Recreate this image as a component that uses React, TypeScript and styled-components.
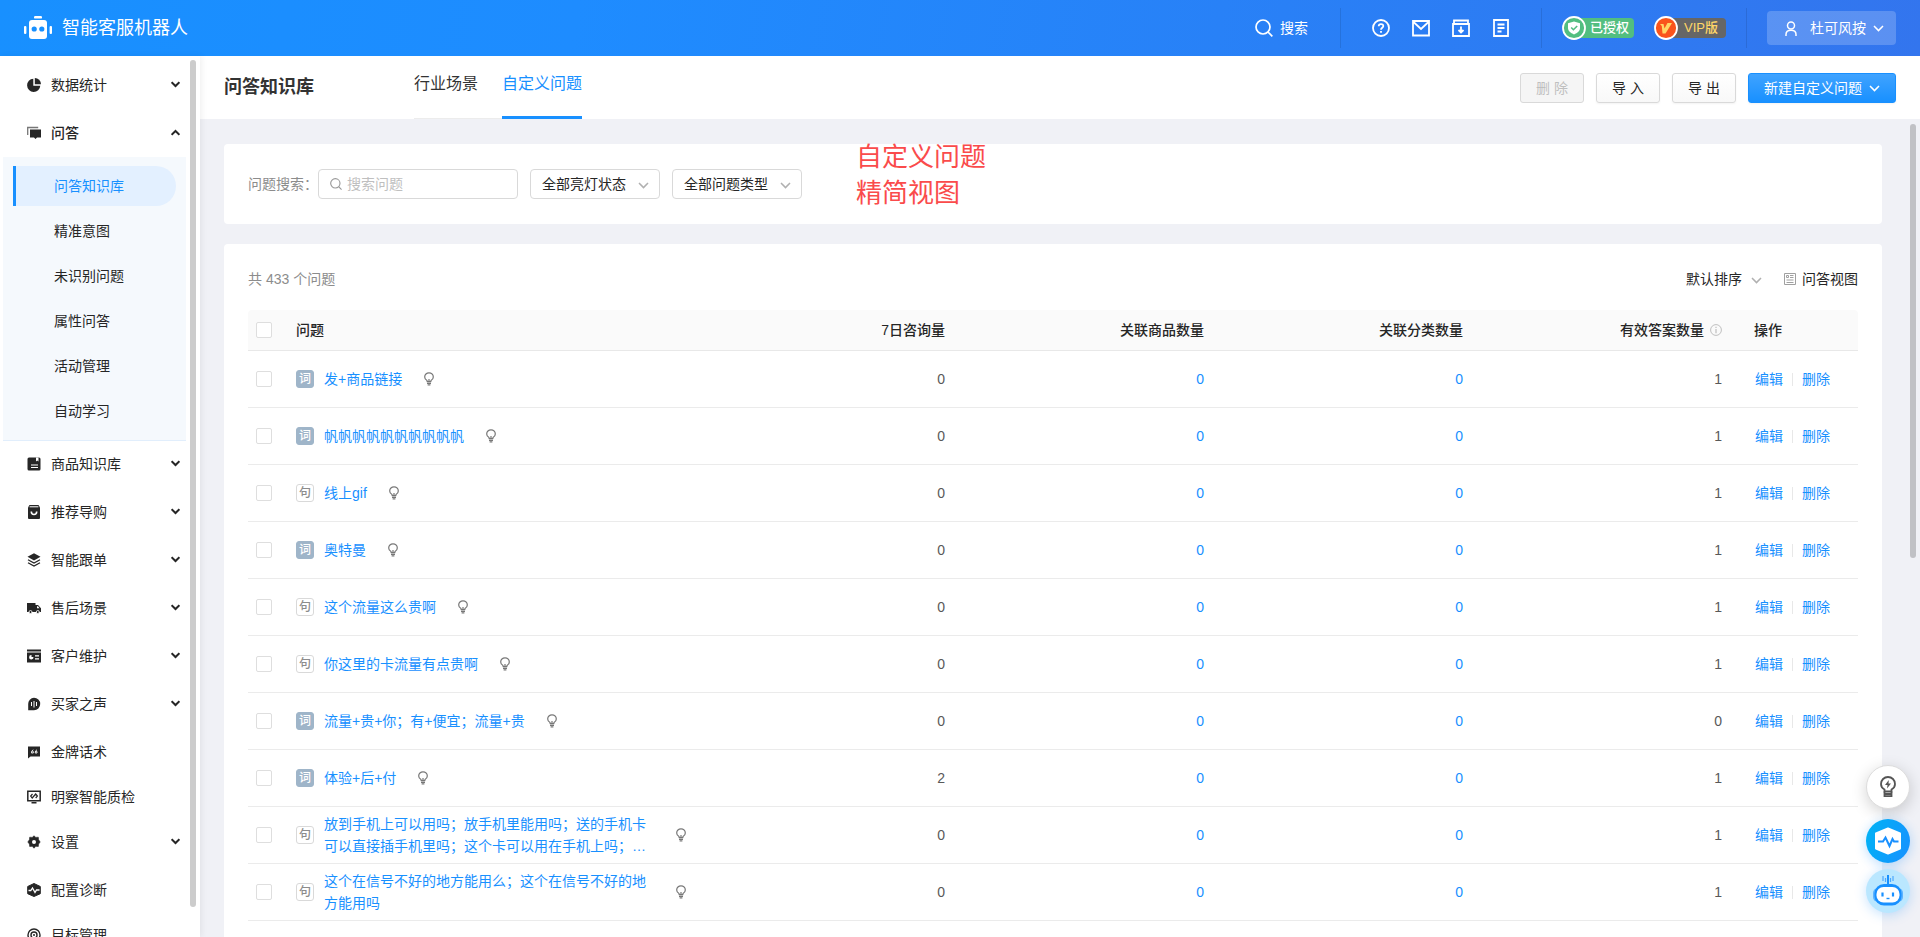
import React from 'react';
import styled, { createGlobalStyle, css } from 'styled-components';

const GlobalStyle = createGlobalStyle`
  *, *::before, *::after { box-sizing: border-box; }
  body {
    margin: 0;
    font-family: "Liberation Sans", "Noto Sans CJK SC", sans-serif;
    font-size: 14px;
    line-height: 22px;
    color: #262626;
  }
  button, input, select { font: inherit; color: inherit; }
  button { padding: 0; border: 0; background: none; cursor: pointer; }
  a { color: inherit; text-decoration: none; }
  svg { display: block; flex: none; }
`;

/* ---------- layout ---------- */

const Page = styled.div`
  display: flex;
  flex-direction: column;
  height: 100vh;
  overflow: hidden;
  background: #f0f1f6;
`;

const Body = styled.div`
  display: flex;
  flex: 1;
  min-height: 0;
`;

const Main = styled.main`
  display: flex;
  flex-direction: column;
  flex: 1;
  min-width: 0;
`;

/* ---------- top bar ---------- */

const TopBar = styled.header`
  display: flex;
  align-items: center;
  flex: none;
  height: 56px;
  padding: 0 24px;
  color: #fff;
  background: linear-gradient(100deg, #1890ff 0%, #1e8cff 30%, #3375ee 100%);
`;

const Brand = styled.a`
  display: flex;
  align-items: center;
  gap: 10px;
  margin-right: auto;
  font-size: 18px;
`;

const TopSearch = styled.button`
  display: flex;
  align-items: center;
  gap: 7px;
  margin-right: 12px;
`;

const TopDivider = styled.span`
  width: 1px;
  height: 40px;
  margin: 0 20px;
  background: rgba(0, 0, 0, 0.1);
`;

const TopIcons = styled.div`
  display: flex;
  align-items: center;
  gap: 22px;
  padding: 0 11px;
`;

const Badge = styled.span<{ $tone: 'green' | 'dark' }>`
  display: flex;
  align-items: center;
  gap: 4px;
  & + & { margin-left: 20px; }
  & > span {
    width: 60px;
    height: 20px;
    margin-left: -16px;
    padding-left: 16px;
    border-radius: 4px;
    font-size: 13px;
    font-weight: 500;
    line-height: 20px;
    ${(p) =>
      p.$tone === 'green'
        ? css`background: #52be80; color: #fff;`
        : css`background: #666; color: #ffd666; padding-left: 18px;`}
  }
  & > svg { position: relative; }
`;

const UserButton = styled.button`
  display: flex;
  align-items: center;
  height: 34px;
  padding: 0 12px 0 18px;
  border-radius: 4px;
  background: rgba(255, 255, 255, 0.2);
  & > span { margin: 0 7px 0 13px; }
`;

/* ---------- side bar ---------- */

const SideBar = styled.aside`
  display: flex;
  flex: none;
  width: 200px;
  overflow: hidden;
  background: #fff;
  position: relative;
  z-index: 1;
  box-shadow: 2px 0 6px rgba(0, 0, 0, 0.06);
`;

const Nav = styled.nav`
  flex: 1;
  padding-top: 6px;
  overflow: hidden;
`;

const SideThumb = styled.div`
  width: 6px;
  margin: 4px 4px 30px 0;
  border-radius: 3px;
  background: #ccc;
`;

const itemStyle = css`
  display: flex;
  align-items: center;
  gap: 10px;
  width: 100%;
  height: 45px;
  padding: 0 10px 0 27px;
  text-align: left;
  & > span { flex: 1; }
`;

const NavGroup = styled.button<{ $open?: boolean }>`
  ${itemStyle}
  margin-bottom: ${(p) => (p.$open ? 2 : 3)}px;
  font-weight: ${(p) => (p.$open ? 500 : 400)};
`;

const NavLeaf = styled.a`
  ${itemStyle}
`;

const SubMenu = styled.div`
  margin: 0 4px 0 3px;
  padding: 6px 0 7px 10px;
  border-bottom: 1px solid #e1eefc;
  background: #f5f9fd;
`;

const SubLink = styled.a<{ $active?: boolean }>`
  display: flex;
  align-items: center;
  height: 45px;
  padding-left: 41px;
  ${(p) =>
    p.$active &&
    css`
      height: 40px;
      margin: 3px 10px 2px 0;
      padding-left: 38px;
      border-left: 3px solid #1890ff;
      border-radius: 0 20px 20px 0;
      background: #e3f0ff;
      color: #1890ff;
    `}
`;

/* ---------- page head ---------- */

const PageHead = styled.div`
  display: flex;
  flex: none;
  height: 63px;
  padding: 0 24px;
  background: #fff;
`;

const Title = styled.h1`
  margin: 0 100px 0 0;
  font-size: 18px;
  line-height: 62px;
  font-weight: 700;
  color: #333;
`;

const Tabs = styled.nav`
  display: flex;
  gap: 24px;
  align-self: stretch;
  margin-right: auto;
  box-shadow: inset 0 -1px #ececec;
`;

const Tab = styled.a<{ $active?: boolean }>`
  padding-bottom: 4px;
  border-bottom: 3px solid ${(p) => (p.$active ? '#1890ff' : 'transparent')};
  color: ${(p) => (p.$active ? '#1890ff' : '#333')};
  font-size: 16px;
  line-height: 56px;
`;

const Actions = styled.div`
  display: flex;
  align-items: center;
  gap: 12px;
  height: 64px;
`;

const Button = styled.button<{ $primary?: boolean }>`
  display: flex;
  align-items: center;
  justify-content: center;
  gap: 7px;
  height: 30px;
  min-width: 64px;
  padding: 0 15px;
  border: 1px solid #d9d9d9;
  border-radius: 3px;
  background: linear-gradient(#fff, #f8f8f8);
  box-shadow: 0 1px 2px rgba(0, 0, 0, 0.05);
  &:disabled {
    background: #f5f5f5;
    color: #bfbfbf;
    box-shadow: none;
  }
  ${(p) =>
    p.$primary &&
    css`
      border-color: #1890ff;
      background: linear-gradient(#40a3ff, #1890ff);
      color: #fff;
    `}
`;

/* ---------- content ---------- */

const Scroller = styled.div`
  display: flex;
  flex: 1;
  min-height: 0;
`;

const Content = styled.div`
  position: relative;
  display: flex;
  flex-direction: column;
  gap: 20px;
  flex: 1;
  min-width: 0;
  padding: 25px 28px 0 24px;
  overflow: hidden;
`;

const MainThumb = styled.div`
  width: 6px;
  height: 53%;
  margin: 5px 4px 0 0;
  border-radius: 3px;
  background: #c0c1c5;
`;

const Card = styled.section`
  border-radius: 4px;
  background: #fff;
`;

const FilterCard = styled(Card)`
  display: flex;
  align-items: center;
  gap: 12px;
  flex: none;
  height: 80px;
  padding: 0 24px;
`;

const ListCard = styled(Card)`
  flex: 1 0 auto;
  padding: 24px;
`;

const SearchField = styled.div`
  display: flex;
  align-items: center;
  & > label { width: 70px; color: #8c8c8c; white-space: nowrap; }
`;

const SearchBox = styled.div`
  display: flex;
  align-items: center;
  gap: 5px;
  width: 200px;
  height: 30px;
  padding: 0 11px;
  border: 1px solid #d9d9d9;
  border-radius: 4px;
  & > svg { color: #999; }
  & > input {
    flex: 1;
    min-width: 0;
    padding: 0;
    border: 0;
    outline: 0;
    background: none;
  }
  & > input::placeholder { color: #bfbfbf; opacity: 1; }
`;

const SelectBox = styled.span<{ $plain?: boolean }>`
  position: relative;
  display: block;
  & > select {
    display: block;
    appearance: none;
    width: ${(p) => (p.$plain ? 76 : 130)}px;
    height: 30px;
    padding: 0 ${(p) => (p.$plain ? '0' : '11px')};
    border: ${(p) => (p.$plain ? '0' : '1px solid #d9d9d9')};
    border-radius: 4px;
    outline: 0;
    background: transparent;
  }
  & > svg {
    position: absolute;
    top: 13px;
    right: ${(p) => (p.$plain ? 0 : 11)}px;
    pointer-events: none;
    color: #b0b0b0;
  }
`;

const Note = styled.p`
  position: absolute;
  top: 20px;
  left: 656px;
  margin: 0;
  color: #fa4b4b;
  font-size: 26px;
  line-height: 36px;
`;

const ListBar = styled.div`
  display: flex;
  align-items: center;
  height: 22px;
  margin-bottom: 20px;
  color: #8c8c8c;
`;

const ListTools = styled.div`
  display: flex;
  align-items: center;
  gap: 22px;
  margin-left: auto;
  color: #262626;
`;

const ViewLink = styled.button`
  display: flex;
  align-items: center;
  gap: 6px;
`;

/* ---------- table ---------- */

const Table = styled.table`
  width: 100%;
  border-collapse: separate;
  border-spacing: 0;
  table-layout: fixed;
`;

const Th = styled.th<{ $num?: boolean; $width?: string; $tick?: boolean }>`
  width: ${(p) => p.$width ?? 'auto'};
  height: 41px;
  padding: 0 ${(p) => (p.$tick ? 8 : 16)}px;
  border-bottom: 1px solid #e8e8e8;
  background: #fafafa;
  text-align: ${(p) => (p.$num ? 'right' : 'left')};
  font-weight: 500;
  white-space: nowrap;
  &:first-child { border-top-left-radius: 4px; }
  &:last-child { border-top-right-radius: 4px; }
`;

const Td = styled.td<{ $num?: boolean; $tick?: boolean }>`
  height: 57px;
  padding: 0 ${(p) => (p.$tick ? 8 : 16)}px;
  border-bottom: 1px solid #ebebeb;
  text-align: ${(p) => (p.$num ? 'right' : 'left')};
  color: #595959;
  white-space: ${(p) => (p.$num ? 'nowrap' : 'normal')};
`;

const Tick = styled.input.attrs({ type: 'checkbox' })`
  display: block;
  appearance: none;
  width: 16px;
  height: 16px;
  margin: 0;
  border: 1px solid #dedede;
  border-radius: 2px;
  background: #fff;
  &:checked { background: #1890ff; border-color: #1890ff; }
`;

const HeadWithHint = styled.span`
  display: inline-flex;
  align-items: center;
  gap: 6px;
`;

const Question = styled.div`
  display: flex;
  align-items: center;
  & > a { max-width: 330px; margin: 0 22px 0 10px; }
  & > svg { color: #777; }
`;

const Tag = styled.span<{ $kind: Kind }>`
  flex: none;
  width: 18px;
  height: 18px;
  border: 1px solid ${(p) => (p.$kind === '词' ? '#9fb5c9' : '#d9d9d9')};
  border-radius: 3px;
  background: ${(p) => (p.$kind === '词' ? '#9fb5c9' : '#fff')};
  color: ${(p) => (p.$kind === '词' ? '#fff' : '#8c8c8c')};
  font-size: 12px;
  font-weight: 500;
  line-height: 16px;
  text-align: center;
`;

const Link = styled.a`
  color: #1890ff;
`;

const RowActions = styled.div`
  display: flex;
  align-items: center;
  margin-right: -16px;
  padding-left: 1px;
  white-space: nowrap;
  & > a + a {
    display: flex;
    align-items: center;
  }
  & > a + a::before {
    content: "";
    width: 1px;
    height: 13px;
    margin: 0 9px;
    background: #e8e8e8;
  }
`;

/* ---------- floating helpers ---------- */

const Floats = styled.div`
  position: fixed;
  right: 10px;
  bottom: 24px;
  z-index: 2;
  display: flex;
  flex-direction: column;
  gap: 6px;
`;

const FloatButton = styled.button<{ $look: 'plain' | 'pulse' | 'robot' }>`
  display: flex;
  align-items: center;
  justify-content: center;
  width: 44px;
  height: 44px;
  border-radius: 50%;
  ${(p) =>
    p.$look === 'plain' &&
    css`
      margin-bottom: 4px;
      border: 1px solid #dcdcdc;
      background: #fff;
      box-shadow: 0 4px 16px rgba(0, 0, 0, 0.18);
    `}
  ${(p) =>
    p.$look === 'pulse' &&
    css`
      background: linear-gradient(110deg, #00b4f5, #1890ff);
      box-shadow: 0 2px 12px rgba(24, 144, 255, 0.3);
    `}
  ${(p) =>
    p.$look === 'robot' &&
    css`
      background: #bae7ff;
      box-shadow: 0 2px 12px rgba(24, 144, 255, 0.25);
    `}
`;

/* ---------- icons ---------- */

const Chevron = ({ size = 11 }: { size?: number }) => (
  <svg width={size} height="7" viewBox="0 0 11 7" fill="none" stroke="currentColor" strokeWidth="1.500">
    <path d="M1 1l4.500 4.600L10 1" />
  </svg>
);

const BoldChevron = ({ up }: { up?: boolean }) => (
  <svg width="9" height="7" viewBox="0 0 9 7" fill="none" stroke="#262626" strokeWidth="2">
    <path d={up ? 'M.6 5.800l3.900-3.800 3.900 3.800' : 'M.6 1.200l3.900 3.800 3.900-3.800'} />
  </svg>
);

const Magnifier = ({ size }: { size: number }) => (
  <svg width={size} height={size} viewBox="0 0 18 18" fill="none" stroke="currentColor" strokeWidth="1.700">
    <circle cx="8" cy="8" r="7" />
    <path d="M13 13l4.300 4.300" />
  </svg>
);

const LogoIcon = () => (
  <svg width="28" height="24" viewBox="0 0 28 24" fill="#fff">
    <rect x="10" y="0" width="8" height="2.600" rx="1.200" />
    <rect x="0" y="10" width="2.400" height="8" rx="1" />
    <rect x="25.600" y="10" width="2.400" height="8" rx="1" />
    <rect x="5" y="4" width="18" height="19" rx="3" />
    <circle cx="10.200" cy="13" r="2.600" fill="#1890ff" />
    <circle cx="17.800" cy="13" r="2.600" fill="#1890ff" />
  </svg>
);

const topIcon = { width: 18, height: 18, viewBox: '0 0 18 18', fill: 'none', stroke: '#fff', strokeWidth: 1.8 };

const HelpIcon = () => (
  <svg {...topIcon}>
    <circle cx="9" cy="9" r="8" />
    <path d="M6.700 7.300C6.700 4.300 11.300 4.400 11.300 7c0 1.700-2.300 1.700-2.300 3.700M9 12v1.700" />
  </svg>
);
const MailIcon = () => (
  <svg {...topIcon}>
    <path d="M1 2h16v14.500H1zM1.500 3L9 10l7.500-7" />
  </svg>
);
const BoxIcon = () => (
  <svg {...topIcon}>
    <path d="M2 5.500V1.500h14v4M1 5h16v12H1zM9 7.500v5.500M6.500 11L9 13.500 11.500 11" />
  </svg>
);
const DocIcon = () => (
  <svg {...topIcon}>
    <path d="M2 1h14v16H2zM5.500 5.500h7M5.500 9h5M8 9h4.500M5.500 12.500h4" />
  </svg>
);

const ShieldIcon = () => (
  <svg width="24" height="24" viewBox="0 0 24 24">
    <circle cx="12" cy="12" r="11" fill="#52be80" stroke="#fff" strokeWidth="1.800" />
    <path d="M12 5.500l6 1.700v4.600c0 3.200-2.500 5.200-6 6.700-3.500-1.500-6-3.500-6-6.700V7.200z" fill="#fff" />
    <path d="M9.200 11.500l2.200 2.200 3.800-3.700" fill="none" stroke="#52be80" strokeWidth="1.600" />
  </svg>
);
const VipIcon = () => (
  <svg width="24" height="24" viewBox="0 0 24 24">
    <circle cx="12" cy="12" r="11" fill="#fa541c" stroke="#fff" strokeWidth="1.800" />
    <path d="M6 8h3.500l1 4.500L13.500 7H18l-6.500 10.500H8.500L7.800 10z" fill="#ffd666" />
  </svg>
);
const UserIcon = () => (
  <svg width="12" height="15" viewBox="0 0 12 15" fill="none" stroke="#fff" strokeWidth="1.500">
    <circle cx="6" cy="4.500" r="3.500" />
    <path d="M1 15v-1.500C1 10.500 3 9.300 6 9.300s5 1.200 5 4.200V15" />
  </svg>
);

const BulbIcon = () => (
  <svg width="10" height="14" viewBox="0 0 10 14" fill="none" stroke="currentColor" strokeWidth="1.200">
    <path d="M3 9.500V8.500C1.500 7.600.7 6.300.7 4.900.7 2.500 2.600.8 5 .8s4.300 1.700 4.300 4.100c0 1.400-.8 2.700-2.300 3.600v1" />
    <path d="M2.800 9.700h4.400M3 11.300h4M3.600 12.900h2.800M5 7v2.500" />
  </svg>
);
const InfoIcon = () => (
  <svg width="12" height="12" viewBox="0 0 12 12" fill="none" stroke="#bfbfbf">
    <circle cx="6" cy="6" r="5.400" />
    <path d="M6 5v4.200M6 2.800V4" strokeWidth="1.200" />
  </svg>
);
const ViewIcon = () => (
  <svg width="12" height="12" viewBox="0 0 12 12" fill="none" stroke="#a0a0a0">
    <path d="M.5.5h11v11H.5z" />
    <path d="M2.500 2.500h2v2h-2zM6 2.500h3.500M6 4.500h3.500M2.500 7h7M2.500 9.500h7" />
  </svg>
);

const dark = '#262626';
const sideIcons: Record<string, React.ReactNode> = {
  pie: (
    <>
      <path d="M6.300.700v7h7A6.600 6.600 0 1 1 6.300.700z" fill={dark} />
      <path d="M7.800 0a6.300 6.300 0 0 1 6.200 6.200H7.800z" fill={dark} />
    </>
  ),
  chat: (
    <>
      <path d="M.7 9V1.500h10.500" fill="none" stroke="#777" strokeWidth="1.300" />
      <path d="M3 3.500h11v8h-4L8.500 13 7 11.500H3z" fill={dark} />
    </>
  ),
  book: (
    <>
      <rect x=".5" y=".5" width="13" height="13" rx="1.500" fill={dark} />
      <path d="M9 .5h2.500v4L10.200 3.500 9 4.500zM4 7.500h7v1H4zM4 10h7v1H4z" fill="#fff" />
    </>
  ),
  bag: (
    <>
      <path d="M2.500 0h9L13 2.500V13a1 1 0 0 1-1 1H2a1 1 0 0 1-1-1V2.500z" fill={dark} />
      <path d="M2.600 1.800h8.800" stroke="#fff" strokeWidth="1" />
      <path d="M4.300 6.500a2.700 3 0 0 0 5.400 0" fill="none" stroke="#fff" strokeWidth="1.600" />
    </>
  ),
  layers: (
    <>
      <path d="M7 .3l6.500 3.500L7 7.400.5 3.800z" fill={dark} />
      <path d="M1 6.800l6 3.300 6-3.300M1 9.800l6 3.300 6-3.300" fill="none" stroke={dark} strokeWidth="1.300" />
    </>
  ),
  truck: (
    <>
      <path d="M0 2h8.500v2H11l3 3.200V11H0z" fill={dark} />
      <path d="M10 5.300h1l1.500 1.900H10z" fill="#fff" />
      <circle cx="3.500" cy="11" r="1.500" fill={dark} stroke="#fff" strokeWidth=".8" />
      <circle cx="10.800" cy="11" r="1.500" fill={dark} stroke="#fff" strokeWidth=".8" />
    </>
  ),
  card: (
    <>
      <path d="M0 .5h14v2H0zM0 3.500h14v10H0z" fill={dark} />
      <path d="M8 6.800h4M8 9.800h4" stroke="#fff" strokeWidth="1.300" />
      <path d="M4.500 6v2h2a2.200 2.200 0 1 1-2-2z" fill="#fff" />
    </>
  ),
  voice: (
    <>
      <path d="M7 .8a6.200 6.200 0 1 1 0 12.400H1.200V7A6 6 0 0 1 7 .8z" fill={dark} />
      <path d="M4.500 5v4M7 4v6.500M9.500 5v4" stroke="#fff" strokeWidth="1" />
    </>
  ),
  quote: (
    <>
      <path d="M1 1.500h12v10H3.500L1 13.500z" fill={dark} />
      <path d="M6.300 4.800Q4.300 5.500 4.500 8h1.800V6.500h-.8M10 4.800Q8 5.500 8.200 8H10V6.500h-.8" fill="none" stroke="#fff" strokeWidth=".9" />
    </>
  ),
  monitor: (
    <>
      <path d="M.8 1.300h12.400v9.400H.8zM4.500 12.800h5" fill="none" stroke={dark} strokeWidth="1.500" />
      <path d="M5.500 4L3.700 6l1.500 2L8.700 4l1.700 2-1.700 2" fill="none" stroke={dark} strokeWidth="1.200" />
    </>
  ),
  gear: (
    <>
      <path d="M7 .8l1.800 1.600 2.500-.2.300 2.500L13.200 7l-1.600 2-.3 2.500-2.500-.2L7 13.200l-1.800-1.900-2.500.2L2.400 9 .8 7l1.600-2.300.3-2.500 2.500.2z" fill={dark} stroke={dark} strokeWidth=".6" />
      <circle cx="7" cy="7" r="2" fill="#fff" />
    </>
  ),
  diagnose: (
    <>
      <path d="M7 0.500l6.300 3v7.200L7 13.500.7 10.700V3.500z" fill={dark} stroke={dark} strokeLinejoin="round" />
      <path d="M1.500 7.500h2.300L5.500 5l2.500 4.500L9.500 7h3" fill="none" stroke="#fff" strokeWidth="1.300" />
    </>
  ),
  target: (
    <>
      <circle cx="7" cy="7" r="6" fill="none" stroke={dark} strokeWidth="1.400" />
      <circle cx="7" cy="7" r="3" fill="none" stroke={dark} strokeWidth="1.400" />
      <circle cx="7" cy="7" r="1" fill={dark} />
    </>
  ),
};

const SideIcon = ({ name }: { name: string }) => (
  <svg width="14" height="14" viewBox="0 0 14 14">
    {sideIcons[name]}
  </svg>
);

/* ---------- data ---------- */

type Kind = '词' | '句';

const menu = [
  { icon: 'pie', text: '数据统计', group: true },
  {
    icon: 'chat',
    text: '问答',
    group: true,
    children: ['问答知识库', '精准意图', '未识别问题', '属性问答', '活动管理', '自动学习'],
  },
  { icon: 'book', text: '商品知识库', group: true },
  { icon: 'bag', text: '推荐导购', group: true },
  { icon: 'layers', text: '智能跟单', group: true },
  { icon: 'truck', text: '售后场景', group: true },
  { icon: 'card', text: '客户维护', group: true },
  { icon: 'voice', text: '买家之声', group: true },
  { icon: 'quote', text: '金牌话术' },
  { icon: 'monitor', text: '明察智能质检' },
  { icon: 'gear', text: '设置', group: true },
  { icon: 'diagnose', text: '配置诊断' },
  { icon: 'target', text: '目标管理' },
];

const rows: { kind: Kind; text: string; asked: number; answers: number }[] = [
  { kind: '词', text: '发+商品链接', asked: 0, answers: 1 },
  { kind: '词', text: '帆帆帆帆帆帆帆帆帆帆', asked: 0, answers: 1 },
  { kind: '句', text: '线上gif', asked: 0, answers: 1 },
  { kind: '词', text: '奥特曼', asked: 0, answers: 1 },
  { kind: '句', text: '这个流量这么贵啊', asked: 0, answers: 1 },
  { kind: '句', text: '你这里的卡流量有点贵啊', asked: 0, answers: 1 },
  { kind: '词', text: '流量+贵+你；有+便宜；流量+贵', asked: 0, answers: 0 },
  { kind: '词', text: '体验+后+付', asked: 2, answers: 1 },
  {
    kind: '句',
    text: '放到手机上可以用吗；放手机里能用吗；送的手机卡可以直接插手机里吗；这个卡可以用在手机上吗；…',
    asked: 0,
    answers: 1,
  },
  { kind: '句', text: '这个在信号不好的地方能用么；这个在信号不好的地方能用吗', asked: 0, answers: 1 },
];

/* ---------- page ---------- */

export default function App() {
  return (
    <Page>
      <GlobalStyle />
      <TopBar>
        <Brand href="#">
          <LogoIcon />
          智能客服机器人
        </Brand>
        <TopSearch>
          <Magnifier size={18} />
          搜索
        </TopSearch>
        <TopDivider />
        <TopIcons>
          <button aria-label="帮助"><HelpIcon /></button>
          <button aria-label="消息"><MailIcon /></button>
          <button aria-label="下载"><BoxIcon /></button>
          <button aria-label="文档"><DocIcon /></button>
        </TopIcons>
        <TopDivider />
        <Badge $tone="green">
          <ShieldIcon />
          <span>已授权</span>
        </Badge>
        <Badge $tone="dark">
          <VipIcon />
          <span>VIP版</span>
        </Badge>
        <TopDivider />
        <UserButton>
          <UserIcon />
          <span>杜可风按</span>
          <Chevron />
        </UserButton>
      </TopBar>

      <Body>
        <SideBar>
          <Nav>
            {menu.map((item) =>
              item.group ? (
                <React.Fragment key={item.text}>
                  <NavGroup $open={!!item.children}>
                    <SideIcon name={item.icon} />
                    <span>{item.text}</span>
                    <BoldChevron up={!!item.children} />
                  </NavGroup>
                  {item.children && (
                    <SubMenu>
                      {item.children.map((child, i) => (
                        <SubLink key={child} href="#" $active={i === 0}>
                          {child}
                        </SubLink>
                      ))}
                    </SubMenu>
                  )}
                </React.Fragment>
              ) : (
                <NavLeaf key={item.text} href="#">
                  <SideIcon name={item.icon} />
                  <span>{item.text}</span>
                </NavLeaf>
              ),
            )}
          </Nav>
          <SideThumb />
        </SideBar>

        <Main>
          <PageHead>
            <Title>问答知识库</Title>
            <Tabs>
              <Tab href="#">行业场景</Tab>
              <Tab href="#" $active>自定义问题</Tab>
            </Tabs>
            <Actions>
              <Button disabled>删 除</Button>
              <Button>导 入</Button>
              <Button>导 出</Button>
              <Button $primary>
                新建自定义问题
                <Chevron />
              </Button>
            </Actions>
          </PageHead>

          <Scroller>
            <Content>
              <FilterCard>
                <SearchField>
                  <label htmlFor="question-search">问题搜索：</label>
                  <SearchBox>
                    <Magnifier size={12} />
                    <input id="question-search" type="text" placeholder="搜索问题" />
                  </SearchBox>
                </SearchField>
                <SelectBox>
                  <select aria-label="亮灯状态">
                    <option>全部亮灯状态</option>
                  </select>
                  <Chevron />
                </SelectBox>
                <SelectBox>
                  <select aria-label="问题类型">
                    <option>全部问题类型</option>
                  </select>
                  <Chevron />
                </SelectBox>
              </FilterCard>

              <ListCard>
                <ListBar>
                  共 433 个问题
                  <ListTools>
                    <SelectBox $plain>
                      <select aria-label="排序方式">
                        <option>默认排序</option>
                      </select>
                      <Chevron />
                    </SelectBox>
                    <ViewLink>
                      <ViewIcon />
                      问答视图
                    </ViewLink>
                  </ListTools>
                </ListBar>

                <Table>
                  <thead>
                    <tr>
                      <Th $tick $width="32px"><Tick aria-label="全选" /></Th>
                      <Th>问题</Th>
                      <Th $num $width="259px">7日咨询量</Th>
                      <Th $num $width="259px">关联商品数量</Th>
                      <Th $num $width="259px">关联分类数量</Th>
                      <Th $num $width="259px">
                        <HeadWithHint>
                          有效答案数量
                          <InfoIcon />
                        </HeadWithHint>
                      </Th>
                      <Th $width="120px">操作</Th>
                    </tr>
                  </thead>
                  <tbody>
                    {rows.map((row) => (
                      <tr key={row.text}>
                        <Td $tick><Tick aria-label={row.text} /></Td>
                        <Td>
                          <Question>
                            <Tag $kind={row.kind}>{row.kind}</Tag>
                            <Link href="#">{row.text}</Link>
                            <BulbIcon />
                          </Question>
                        </Td>
                        <Td $num>{row.asked}</Td>
                        <Td $num><Link href="#">0</Link></Td>
                        <Td $num><Link href="#">0</Link></Td>
                        <Td $num>{row.answers}</Td>
                        <Td>
                          <RowActions>
                            <Link href="#">编辑</Link>
                            <Link href="#">删除</Link>
                          </RowActions>
                        </Td>
                      </tr>
                    ))}
                  </tbody>
                </Table>
              </ListCard>

              <Note>
                自定义问题
                <br />
                精简视图
              </Note>
            </Content>
            <MainThumb />
          </Scroller>
        </Main>
      </Body>

      <Floats>
        <FloatButton $look="plain" aria-label="提示">
          <svg width="16" height="22" viewBox="0 0 16 22" fill="none" stroke="#555" strokeWidth="1.800">
            <path d="M4.500 15.500v-2C2.300 12.300 1 10.400 1 8c0-4 3.100-7 7-7s7 3 7 7c0 2.400-1.300 4.300-3.500 5.500v2z" />
            <path d="M4.500 15.500v4.700h7v-4.700M4.500 18h7" />
            <path d="M8.800 4L5 9h2.500L7 12.500 11 7.500H8.500z" fill="#555" stroke="none" />
          </svg>
        </FloatButton>
        <FloatButton $look="pulse" aria-label="诊断">
          <svg width="28" height="28" viewBox="0 0 28 28" fill="none">
            <path d="M14 1.500l12 5v15l-12 5-12-5v-15z" fill="#fff" stroke="#fff" strokeWidth="2" strokeLinejoin="round" />
            <path d="M4 14.500h5l2.500-4 4 8.500 3-7 1.500 2.500h4.500" stroke="#1890ff" strokeWidth="2" />
          </svg>
        </FloatButton>
        <FloatButton $look="robot" aria-label="机器人助手">
          <svg width="44" height="44" viewBox="0 0 44 44">
            <path d="M17 7v5M19.500 9v4M24.500 9v4M27 7v5" stroke="#4da9ff" strokeWidth="1.200" />
            <path d="M22 6v9" stroke="#1890ff" strokeWidth="2" />
            <rect x="7" y="19" width="30" height="14" rx="5" fill="#5cb3ff" />
            <rect x="8.500" y="15" width="27" height="21.500" rx="9.500" fill="#1890ff" />
            <rect x="10.500" y="18" width="23" height="15.500" rx="7" fill="#fff" />
            <path d="M16.500 23.500v4M27 23.500v4" stroke="#1890ff" strokeWidth="2.200" />
            <path d="M20.500 29.500h3" stroke="#1890ff" strokeWidth="1.400" />
          </svg>
        </FloatButton>
      </Floats>
    </Page>
  );
}
